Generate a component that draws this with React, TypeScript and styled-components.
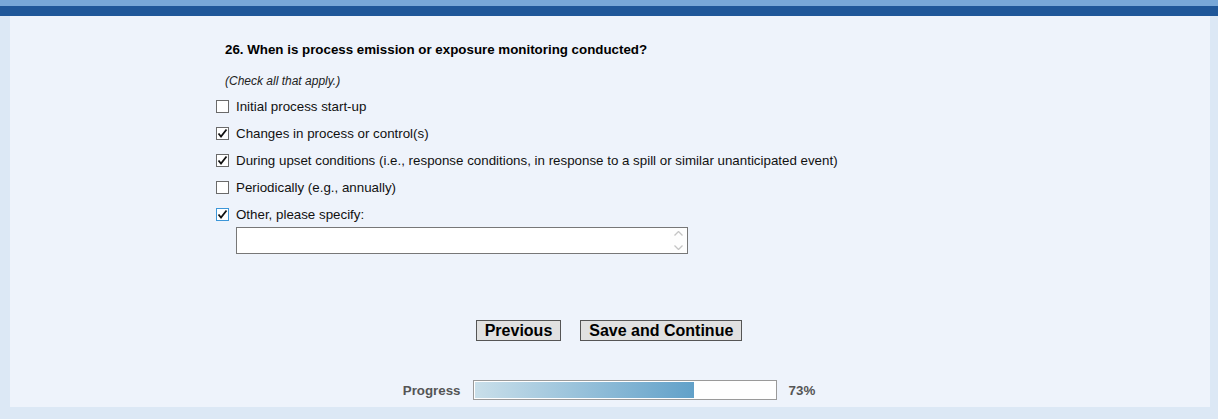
import styled, { createGlobalStyle } from "styled-components";

const Global = createGlobalStyle`
  body {
    margin: 0;
    background: #dce8f5;
    font-family: "Liberation Sans", Arial, sans-serif;
  }
`;

const TopBar = styled.div`
  height: 6px;
  background: #78a8d8;
`;

const NavBar = styled.div`
  height: 10px;
  background: #1f5799;
`;

const Panel = styled.div`
  margin: 0 8px 0 10px;
  height: 391px;
  background: #eef3fb;
  box-sizing: border-box;
  padding: 27px 0 0 206px;
`;

const Question = styled.div`
  padding-left: 9px;
  font-size: 13.33px;
  font-weight: bold;
  color: #000;
  line-height: 14px;
`;

const Hint = styled.div`
  padding-left: 9px;
  margin-top: 17px;
  font-size: 12px;
  font-style: italic;
  color: #222;
  line-height: 14px;
`;

const Options = styled.div`
  margin-top: 5px;
  display: flex;
  flex-direction: column;
`;

const Option = styled.label`
  display: flex;
  align-items: center;
  gap: 7px;
  height: 27px;
  font-size: 13.33px;
  color: #111;
`;

const Box = styled.span<{ $focus?: boolean }>`
  width: 11px;
  height: 11px;
  border: 1px solid ${(p) => (p.$focus ? "#3c96d8" : "#6a6a6a")};
  background: #fff;
  display: flex;
  align-items: center;
  justify-content: center;
  flex: none;
`;

const SpecifyBox = styled.div`
  margin: -1px 0 0 20px;
  width: 450px;
  height: 25px;
  border: 1px solid #777;
  background: #fff;
  display: flex;
  justify-content: flex-end;
  align-items: stretch;
`;

const Spinner = styled.div`
  width: 17px;
  padding: 3px 0;
  display: flex;
  flex-direction: column;
  justify-content: space-between;
  align-items: center;
  background: #fdfdfd;
`;

const Buttons = styled.div`
  margin: 66px 0 0 -206px;
  padding-right: 2px;
  display: flex;
  justify-content: center;
  gap: 19px;
`;

const Button = styled.button`
  font-family: "Liberation Sans", Arial, sans-serif;
  font-size: 16px;
  font-weight: bold;
  color: #000;
  background: #e1e1e1;
  border: 1px solid #555;
  padding: 0 8px;
  height: 21px;
  line-height: 19px;
  border-radius: 0;
`;

const ProgressRow = styled.div`
  margin: 39px 0 0 -206px;
  padding-right: 2px;
  display: flex;
  justify-content: center;
  align-items: center;
  gap: 12px;
  font-size: 13.33px;
  font-weight: bold;
  color: #555;
`;

const Track = styled.div`
  width: 300px;
  height: 16px;
  border: 1px solid #9a9a9a;
  background: #fff;
  padding: 1px;
`;

const Fill = styled.div`
  height: 100%;
  background: linear-gradient(to right, #c9dfea, #62a1c9);
`;

const Check = () => (
  <svg width="11" height="11" viewBox="0 0 11 11">
    <path d="M1.5 5.5 L4 8.5 L9.5 1.5" fill="none" stroke="#111" strokeWidth="1.8" />
  </svg>
);

const Chevron = ({ up }: { up?: boolean }) => (
  <svg width="9" height="5" viewBox="0 0 9 5">
    <path d={up ? "M0.5 4.5 L4.5 0.5 L8.5 4.5" : "M0.5 0.5 L4.5 4.5 L8.5 0.5"} fill="none" stroke="#c4c4c4" strokeWidth="1.3" />
  </svg>
);

const options = [
  { text: "Initial process start-up", checked: false },
  { text: "Changes in process or control(s)", checked: true },
  {
    text: "During upset conditions (i.e., response conditions, in response to a spill or similar unanticipated event)",
    checked: true,
  },
  { text: "Periodically (e.g., annually)", checked: false },
  { text: "Other, please specify:", checked: true, focus: true },
];

const progress = 73;

export default function App() {
  return (
    <>
      <Global />
      <TopBar />
      <NavBar />
      <Panel>
        <Question>26. When is process emission or exposure monitoring conducted?</Question>
        <Hint>(Check all that apply.)</Hint>
        <Options>
          {options.map((o) => (
            <Option key={o.text}>
              <Box $focus={o.focus}>{o.checked && <Check />}</Box>
              {o.text}
            </Option>
          ))}
        </Options>
        <SpecifyBox>
          <Spinner>
            <Chevron up />
            <Chevron />
          </Spinner>
        </SpecifyBox>
        <Buttons>
          <Button>Previous</Button>
          <Button>Save and Continue</Button>
        </Buttons>
        <ProgressRow>
          <span>Progress</span>
          <Track>
            <Fill style={{ width: `${progress}%` }} />
          </Track>
          <span>{progress}%</span>
        </ProgressRow>
      </Panel>
    </>
  );
}
